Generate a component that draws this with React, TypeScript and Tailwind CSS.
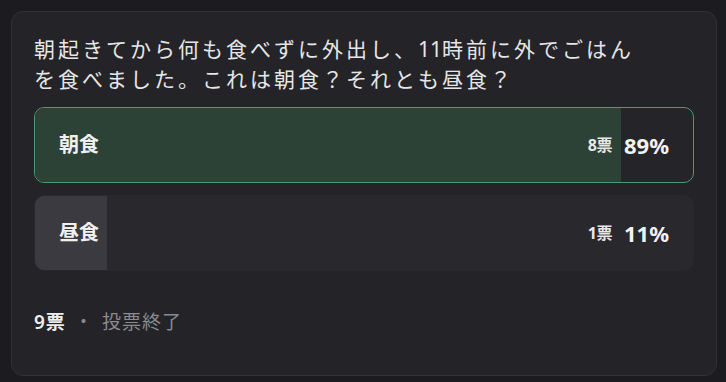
const options = [
  { label: '朝食', votes: 8, percent: 89, selected: true },
  { label: '昼食', votes: 1, percent: 11, selected: false },
];

const font = { fontFamily: '"Noto Sans", "Noto Sans CJK JP", sans-serif' };

const PollOption = ({ label, votes, percent, selected }: (typeof options)[number]) => (
  <div
    className={
      'relative h-[76px] overflow-hidden rounded-[10px] border ' +
      (selected ? 'border-[#4f9a6c] bg-[#252529]' : 'border-[#28282d] bg-[#28282d]')
    }
  >
    <div
      className={'absolute inset-y-0 left-0 ' + (selected ? 'bg-[#2c4236]' : 'bg-[#3a3a40]')}
      style={{ width: `${percent}%` }}
    />
    <div className="relative flex h-full items-center justify-between pl-[24px] pr-[24px]">
      <span className="text-[20px] font-bold text-[#f0f0f0]">{label}</span>
      <div className="flex items-center gap-[12px]">
        <span className="text-[16px] font-bold tracking-[-0.5px] text-[#e8e8e8]">{votes}票</span>
        <span className="text-[22px] font-bold text-[#f2f2f2]">{percent}%</span>
      </div>
    </div>
  </div>
);

export default function App() {
  return (
    <div className="h-[382px] w-[726px] bg-[#1b1b20] p-[11px]" style={font}>
      <div className="w-[706px] rounded-[12px] border border-[#303036] bg-[#232328] px-[22px] pt-[22px] pb-[39px]">
        <p className="w-[620px] text-[21px] leading-[30px] tracking-[3px] text-[#e6e6e6]">
          朝起きてから何も食べずに外出し、<span className="tracking-[0px]">11</span>時前に外でごはんを食べました。これは朝食？それとも昼食？
        </p>
        <div className="mt-[13px] flex flex-col gap-[12px]">
          {options.map((o) => (
            <PollOption key={o.label} {...o} />
          ))}
        </div>
        <div className="mt-[37px] flex items-center text-[19px] leading-[28px] tracking-[1px]">
          <span className="font-semibold text-[#ececec]">9票</span>
          <span className="mx-[8px] text-[#8a8a90]">・</span>
          <span className="text-[#8a8a90]">投票終了</span>
        </div>
      </div>
    </div>
  );
}
